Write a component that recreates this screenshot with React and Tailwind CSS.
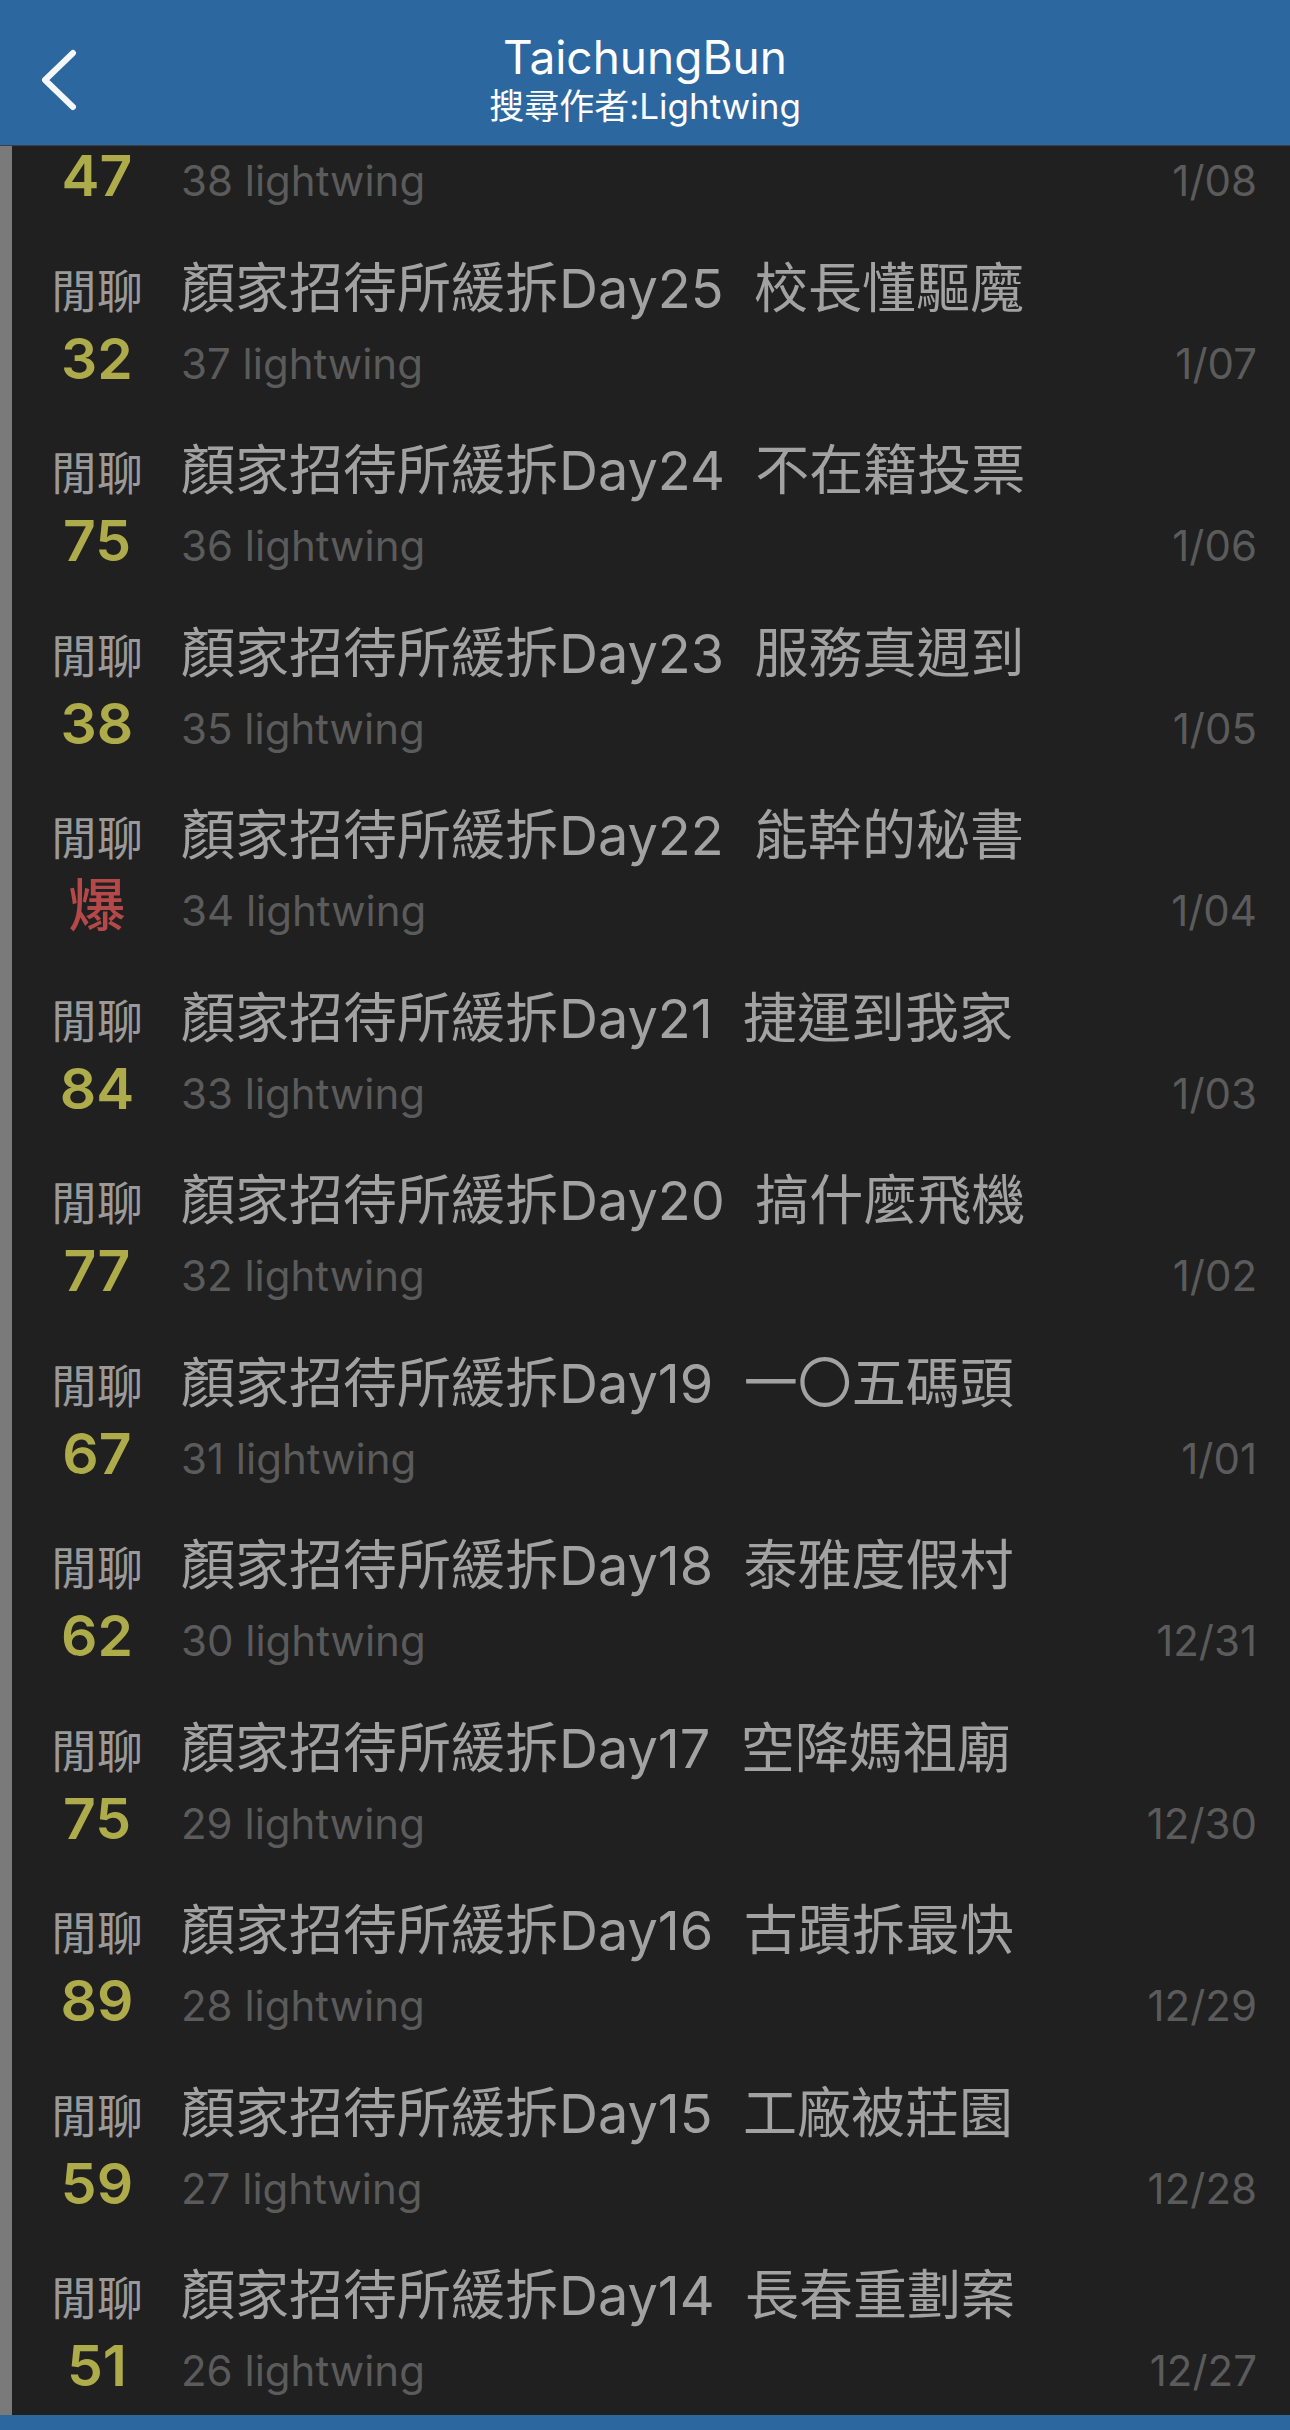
import { useState } from 'react';

const posts = [
  { title: '', score: '47', no: 38, date: '1/08' },
  { title: '顏家招待所緩拆Day25  校長懂驅魔', score: '32', no: 37, date: '1/07' },
  { title: '顏家招待所緩拆Day24  不在籍投票', score: '75', no: 36, date: '1/06' },
  { title: '顏家招待所緩拆Day23  服務真週到', score: '38', no: 35, date: '1/05' },
  { title: '顏家招待所緩拆Day22  能幹的秘書', score: '爆', no: 34, date: '1/04' },
  { title: '顏家招待所緩拆Day21  捷運到我家', score: '84', no: 33, date: '1/03' },
  { title: '顏家招待所緩拆Day20  搞什麼飛機', score: '77', no: 32, date: '1/02' },
  { title: '顏家招待所緩拆Day19  一〇五碼頭', score: '67', no: 31, date: '1/01' },
  { title: '顏家招待所緩拆Day18  泰雅度假村', score: '62', no: 30, date: '12/31' },
  { title: '顏家招待所緩拆Day17  空降媽祖廟', score: '75', no: 29, date: '12/30' },
  { title: '顏家招待所緩拆Day16  古蹟拆最快', score: '89', no: 28, date: '12/29' },
  { title: '顏家招待所緩拆Day15  工廠被莊園', score: '59', no: 27, date: '12/28' },
  { title: '顏家招待所緩拆Day14  長春重劃案', score: '51', no: 26, date: '12/27' },
];

function PostRow({ post }) {
  const hot = post.score === '爆';
  return (
    <div className="h-[182.5px] pt-[13px] pl-[28px] pr-[33px]">
      {/* 分類 + 標題 */}
      <div className="flex items-baseline h-[70px] leading-[70px]">
        <div className="w-[114px] shrink-0 text-center text-[46px] text-[#9a9a9a]">閒聊</div>
        <div className="ml-[27px] text-[54px] text-[#a2a2a2] whitespace-pre">{post.title}</div>
      </div>
      {/* 推文數 + 作者 + 日期 */}
      <div className="flex items-baseline h-[70px] leading-[70px]">
        <div
          className={
            hot
              ? 'w-[114px] shrink-0 text-center text-[57px] font-medium text-[#b54848]'
              : 'w-[114px] shrink-0 text-center text-[57px] font-semibold text-[#aeab4a]'
          }
        >
          {post.score}
        </div>
        <div className="ml-[27px] text-[42px] text-[#5b5b5b] whitespace-pre">{post.no} lightwing</div>
        <div className="ml-auto text-[42px] text-[#5b5b5b]">{post.date}</div>
      </div>
    </div>
  );
}

export default function App() {
  const [items] = useState(posts);

  return (
    <div className="w-[1290px] h-[2430px] flex flex-col bg-[#202020] overflow-hidden font-[family-name:Inter,'Noto_Sans_CJK_TC',sans-serif]">
      {/* 標題列 */}
      <header className="relative z-10 h-[146px] shrink-0 bg-[#2c67a0] border-b border-[#3a3f45] flex flex-col items-center pt-[31px] text-white">
        <button className="absolute left-[36px] top-[48px] w-[44px] h-[64px] flex items-center justify-center">
          <svg width="40" height="62" viewBox="0 0 40 62" fill="none">
            <path d="M35 4 L7 31 L35 58" stroke="#f4f6f8" strokeWidth="6" strokeLinecap="round" strokeLinejoin="round" />
          </svg>
        </button>
        <div className="text-[46px] leading-[52px]">TaichungBun</div>
        <div className="mt-[2px] text-[35px] leading-[42px]">搜尋作者:Lightwing</div>
      </header>

      {/* 文章列表 */}
      <div className="flex-1 min-h-0 overflow-hidden border-l-[12px] border-[#7a7a7a]">
        <div className="-mt-[88px]">
          {items.map((p) => (
            <PostRow key={p.no} post={p} />
          ))}
        </div>
      </div>

      <div className="h-[15px] shrink-0 bg-[#2c67a0]" />
    </div>
  );
}
